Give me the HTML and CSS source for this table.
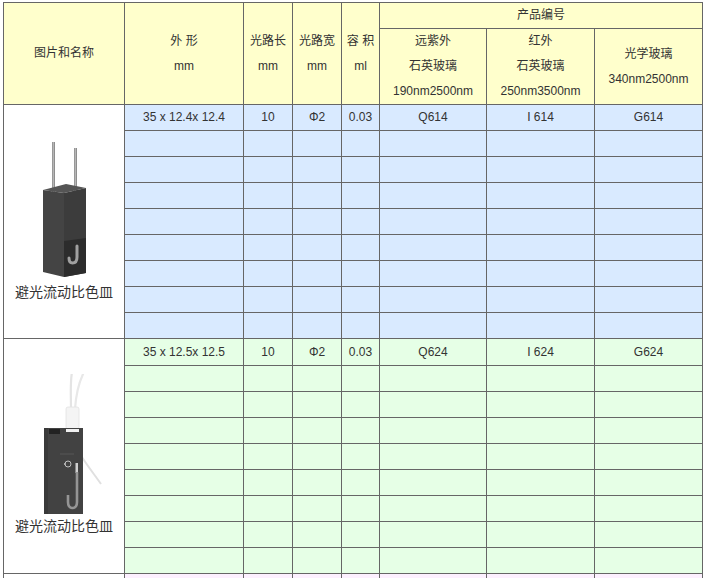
FILE: index.html
```html
<!DOCTYPE html>
<html lang="zh">
<head>
<meta charset="utf-8">
<title>避光流动比色皿</title>
<link rel="stylesheet" href="styles.css">
</head>
<body>
<table class="spec">
  <colgroup>
    <col class="c-img"><col class="c-size"><col class="c-len"><col class="c-wid"><col class="c-vol"><col class="c-code"><col class="c-code2"><col class="c-code2">
  </colgroup>
  <thead>
    <tr class="h1">
      <th rowspan="2">图片和名称</th>
      <th rowspan="2">外 形<br>mm</th>
      <th rowspan="2">光路长<br>mm</th>
      <th rowspan="2">光路宽<br>mm</th>
      <th rowspan="2">容 积<br>ml</th>
      <th colspan="3">产品编号</th>
    </tr>
    <tr class="h2">
      <th>远紫外<br>石英玻璃<br>190nm2500nm</th>
      <th>红外<br>石英玻璃<br>250nm3500nm</th>
      <th>光学玻璃<br>340nm2500nm</th>
    </tr>
  </thead>
  <tbody class="sec blue">
    <tr>
      <td rowspan="9" class="pic">
        <svg class="cuvette" width="80" height="140" viewBox="0 0 80 140" aria-hidden="true">
          <rect x="28" y="2" width="3" height="50" fill="#8e8e8e"/>
          <rect x="28.8" y="2" width="1" height="50" fill="#c0c0c0"/>
          <rect x="50" y="8" width="3" height="44" fill="#8e8e8e"/>
          <rect x="50.8" y="8" width="1" height="44" fill="#c0c0c0"/>
          <polygon points="19,50 42,44 62,48 40,53" fill="#555555"/>
          <polygon points="19,50 40,53 40,137 19,132" fill="#444444"/>
          <polygon points="40,53 62,48 62,133 40,137" fill="#3c3c3c"/>
          <polygon points="40,101 62,98 62,133 40,137" fill="#2c2c2c"/>
          <path d="M53,106 L53,117 Q53,123 48.5,123 Q45,123 45,118" fill="none" stroke="#a0a0a0" stroke-width="3" stroke-linecap="round"/>
        </svg>
        <div class="name">避光流动比色皿</div>
      </td>
      <td>35 x 12.4x 12.4</td><td>10</td><td>Φ2</td><td>0.03</td><td>Q614</td><td>I 614</td><td>G614</td>
    </tr>
    <tr><td></td><td></td><td></td><td></td><td></td><td></td><td></td></tr>
    <tr><td></td><td></td><td></td><td></td><td></td><td></td><td></td></tr>
    <tr><td></td><td></td><td></td><td></td><td></td><td></td><td></td></tr>
    <tr><td></td><td></td><td></td><td></td><td></td><td></td><td></td></tr>
    <tr><td></td><td></td><td></td><td></td><td></td><td></td><td></td></tr>
    <tr><td></td><td></td><td></td><td></td><td></td><td></td><td></td></tr>
    <tr><td></td><td></td><td></td><td></td><td></td><td></td><td></td></tr>
    <tr><td></td><td></td><td></td><td></td><td></td><td></td><td></td></tr>
  </tbody>
  <tbody class="sec green">
    <tr class="first">
      <td rowspan="9" class="pic">
        <svg class="cuvette" width="80" height="140" viewBox="0 0 80 140" aria-hidden="true">
          <path d="M47,35 C47,20 46,10 48,-2" fill="none" stroke="#e4e4e4" stroke-width="2.2"/>
          <path d="M51,35 C52,20 55,8 60,-2" fill="none" stroke="#e8e8e8" stroke-width="2.2"/>
          <path d="M56,80 C62,90 70,100 77,110" fill="none" stroke="#e0e0e0" stroke-width="2"/>
          <rect x="42" y="33" width="13" height="22" rx="2" fill="#f4f4f4"/>
          <rect x="42" y="33" width="13" height="22" rx="2" fill="none" stroke="#e2e2e2" stroke-width="0.8"/>
          <rect x="20" y="54" width="39" height="86" fill="#424242"/>
          <rect x="20" y="54" width="4" height="86" fill="#3a3a3a"/>
          <rect x="25" y="55" width="11" height="5" fill="#222222"/>
          <rect x="42" y="55" width="13" height="3" fill="#f0f0f0"/>
          <line x1="36" y1="80" x2="50" y2="80" stroke="#5e5e5e" stroke-width="0.8"/>
          <circle cx="44" cy="90" r="3" fill="none" stroke="#c0c0c0" stroke-width="1"/>
          <rect x="40" y="89" width="2" height="2" fill="#aaa"/>
          <rect x="51.5" y="89" width="2.5" height="10" fill="#d0d0d0"/>
          <path d="M53,98 L53,128 Q53,134 48.5,134 Q44,134 44,128 L44,121" fill="none" stroke="#959595" stroke-width="2.6"/>
        </svg>
        <div class="name">避光流动比色皿</div>
      </td>
      <td>35 x 12.5x 12.5</td><td>10</td><td>Φ2</td><td>0.03</td><td>Q624</td><td>I 624</td><td>G624</td>
    </tr>
    <tr><td></td><td></td><td></td><td></td><td></td><td></td><td></td></tr>
    <tr><td></td><td></td><td></td><td></td><td></td><td></td><td></td></tr>
    <tr><td></td><td></td><td></td><td></td><td></td><td></td><td></td></tr>
    <tr><td></td><td></td><td></td><td></td><td></td><td></td><td></td></tr>
    <tr><td></td><td></td><td></td><td></td><td></td><td></td><td></td></tr>
    <tr><td></td><td></td><td></td><td></td><td></td><td></td><td></td></tr>
    <tr><td></td><td></td><td></td><td></td><td></td><td></td><td></td></tr>
    <tr><td></td><td></td><td></td><td></td><td></td><td></td><td></td></tr>
  </tbody>
  <tbody class="sec pink">
    <tr>
      <td rowspan="3" class="pic"></td>
      <td></td><td></td><td></td><td></td><td></td><td></td><td></td>
    </tr>
    <tr><td></td><td></td><td></td><td></td><td></td><td></td><td></td></tr>
    <tr><td></td><td></td><td></td><td></td><td></td><td></td><td></td></tr>
  </tbody>
</table>
</body>
</html>
```

FILE: styles.css
```css
html, body {
  margin: 0;
  padding: 0;
  background: #ffffff;
}

body {
  padding: 2px 0 0 3px;
  font-family: "Liberation Sans", Arial, "Noto Sans CJK SC", sans-serif;
  font-size: 12px;
  color: #333333;
}

.spec {
  border-collapse: collapse;
  table-layout: fixed;
  width: 700px;
}

.c-img { width: 121px; }
.c-size { width: 119px; }
.c-len { width: 49px; }
.c-wid { width: 49px; }
.c-vol { width: 38px; }
.c-code { width: 107px; }
.c-code2 { width: 108px; }

.spec th,
.spec td {
  border: 1px solid #666666;
  padding: 0;
  line-height: 25px;
  height: 25px;
  text-align: center;
  vertical-align: middle;
  font-weight: normal;
  white-space: nowrap;
}

.spec thead th {
  background: #ffffcc;
}

.blue td { background: #d9eaff; }
.green td { background: #e6ffe6; }
.pink td { background: #fdf0ff; }

.green tr.first td { height: 26px; }

.spec td.pic {
  background: #ffffff;
  vertical-align: middle;
}

.cuvette {
  display: block;
  margin: 0 auto;
}

.name {
  font-size: 14px;
  line-height: 24px;
  color: #333333;
}
```
